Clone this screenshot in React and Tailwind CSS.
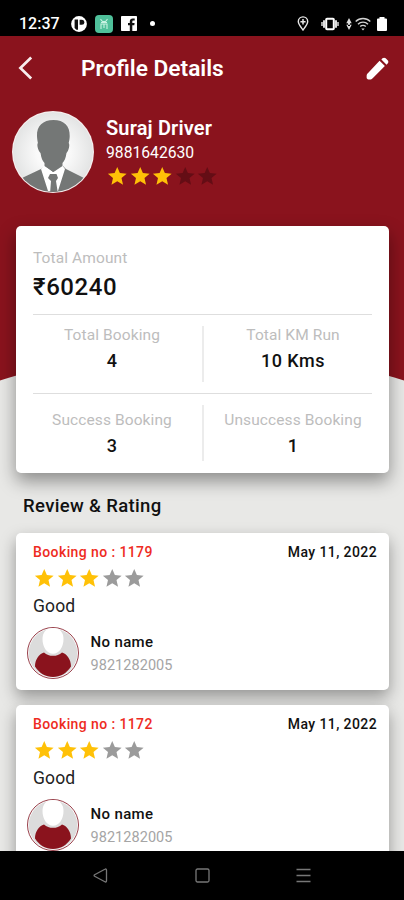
import React from 'react';

const reviews = [
  { id: 1179, date: 'May 11, 2022', rating: 3, comment: 'Good', name: 'No name', phone: '9821282005' },
  { id: 1172, date: 'May 11, 2022', rating: 3, comment: 'Good', name: 'No name', phone: '9821282005' },
];

function StatusBar() {
  return (
    <div className="h-9 shrink-0 bg-black text-white flex items-center pt-[11px] pl-[19px] pr-[17px]">
      <span className="w-[52px] pt-px text-[16px] leading-none font-medium">12:37</span>
      <svg viewBox="0 0 16 16" className="w-4 h-4 mr-2">
        <circle cx="8" cy="8" r="7.9" fill="#fff" />
        <path d="M3.6 3.6H7v10.2H5.4L3.6 12z" fill="#111" />
        <path d="M8.6 3.7h2.2a2.2 2.2 0 0 1 0 5H8.6z" fill="#111" />
      </svg>
      <svg viewBox="0 0 18 18" className="w-[18px] h-[18px] mr-[8px]">
        <rect width="18" height="18" rx="4" fill="#4fc09a" />
        <path d="M5.5 4.2l2 2.3h3l2-2.3M6 14V9h6v5M9 9v4M6 7.5h6" stroke="#c9f2e2" strokeWidth="1.1" fill="none" />
      </svg>
      <svg viewBox="0 0 16 15" className="w-4 h-[15px] mr-[13px]">
        <rect width="16" height="15" rx="0.8" fill="#fff" />
        <path d="M8.8 15V9.3H7V7.1h1.8V5.6c0-2 1.1-3.1 3-3.1h1.9v2.1h-1.3c-.8 0-1.1.4-1.1 1.1v1.4h2.3L13.3 9.3h-2V15z" fill="#111" />
      </svg>
      <span className="w-[5px] h-[5px] rounded-full bg-white"></span>
      <div className="flex items-center ml-auto">
        <svg viewBox="0 0 12 15" className="w-3 h-[15px] mr-[12px]" fill="none" stroke="#e8e8e8">
          <path d="M6 14C3.4 10.700 1.300 8.300 1.300 5.600a4.700 4.700 0 0 1 9.400 0C10.700 8.300 8.600 10.700 6 14z" strokeWidth="1.400" />
          <path d="M6 3v5.400M3.400 5.700h5.200" strokeWidth="1.500" />
        </svg>
        <svg viewBox="0 0 18 14" className="w-[18px] h-[14px] mr-[7px]">
          <rect x="5.200" y="1.800" width="7.600" height="10.400" rx="0.800" fill="none" stroke="#fff" strokeWidth="2" />
          <path d="M3 3.200v7.600M15 3.200v7.600" stroke="#ddd" strokeWidth="2" />
          <path d="M1 5v4M17 5v4" stroke="#ccc" strokeWidth="1.600" />
        </svg>
        <svg viewBox="0 0 6 12" className="w-[6px] h-3 mr-[3px]" fill="#ddd">
          <path d="M3 0l2.700 5.200H.3zM3 12l2.700-5.200H.3zM2 4h2v4H2z" />
        </svg>
        <svg viewBox="0 0 16 14" className="w-4 h-[14px] mr-[6px]" fill="none" stroke="#d2d2d2" strokeWidth="1.400">
          <path d="M.7 4.500a10.300 10.300 0 0 1 14.600 0M3 7.200a7 7 0 0 1 10 0M5.200 9.600a4 4 0 0 1 5.600 0" />
          <path d="M8 13.600l-1.700-2h3.400z" fill="#d2d2d2" stroke="none" />
        </svg>
        <svg viewBox="0 0 10 14" className="w-[10px] h-[14px]">
          <path d="M2.500 0h5v1.400H9a1 1 0 0 1 1 1V13a1 1 0 0 1-1 1H1a1 1 0 0 1-1-1V2.400a1 1 0 0 1 1-1h1.500z" fill="#fff" />
        </svg>
      </div>
    </div>
  );
}

function Stars({ rating, emptyClass }) {
  return (
    <div className="flex">
      {[1, 2, 3, 4, 5].map((n) => (
        <svg
          key={n}
          viewBox="0 0 24 24"
          className={`w-[22.5px] h-[22.5px] ${n <= rating ? 'fill-[#ffc107]' : emptyClass}`}
        >
          <path d="M12 17.27L18.18 21l-1.64-7.03L22 9.24l-7.190-.61L12 2 9.190 8.630 2 9.240l5.460 4.730L5.820 21z" />
        </svg>
      ))}
    </div>
  );
}

function DriverAvatar() {
  return (
    <svg viewBox="0 0 82 82" className="w-[82px] h-[82px] shrink-0">
      <defs>
        <radialGradient id="driverBg">
          <stop offset="0.4" stopColor="#fafafa" />
          <stop offset="1" stopColor="#e3e4e4" />
        </radialGradient>
        <clipPath id="driverClip">
          <circle cx="41" cy="41" r="40" />
        </clipPath>
      </defs>
      <circle cx="41" cy="41" r="41" fill="#f6eeee" />
      <g clipPath="url(#driverClip)">
        <circle cx="41" cy="41" r="40" fill="url(#driverBg)" />
        <path d="M32 55l-3 3-19 9-8 16h78l-8-16-18-9-3-3z" fill="#747776" />
        <path d="M32 54L29 58l7 22h10l7-22-3-4-9 7z" fill="#fff" />
        <path d="M38 63h6.500l1.500 4-2 3 2 13H38l1-13-3-3z" fill="#747776" />
        <path
          d="M41.500 9C31 9 24.500 15 25 25c.1 3 .6 5 .9 7-1.400 1.500.2 8 2.600 10 .8 5 2 8 4 10v3l9 6 9-6v-3c2-2 3.200-5 4-10 2.300-2 3.600-8.500 2.200-10 .4-2 1-4 1-7C58 15 52 9 41.500 9z"
          fill="#747776"
        />
      </g>
    </svg>
  );
}

function UserAvatar() {
  return (
    <svg viewBox="0 0 52 52" className="w-[52px] h-[52px] shrink-0">
      <circle cx="26" cy="26" r="25.500" fill="#fff" stroke="#8c2a35" strokeWidth="0.900" />
      <circle cx="26" cy="26" r="24.300" fill="#dcdcdc" />
      <path d="M17 25.500c-5 1.500-9 7-9 14C12.500 46.500 19 50 26 50s13.500-3.500 18-10.500c0-7-4-12.500-9-14-2.500 2.500-5.500 3.300-9 3.300s-6.500-.8-9-3.300z" fill="#8a131d" />
      <path d="M26 .9c-7 0-10.500 4.600-10.500 11.100 0 8 4.500 14.800 10.500 14.800S36.500 20 36.500 12C36.500 5.500 33 .9 26 .9z" fill="#fff" />
    </svg>
  );
}

function Stat({ label, value }) {
  return (
    <div className="w-[158px] flex flex-col items-center">
      <span className="text-[15.5px] leading-[20px] tracking-[0.1px] text-[#bdbdbd] whitespace-nowrap">{label}</span>
      <span className="mt-1.5 text-[18px] leading-[20px] font-medium tracking-[0.5px] text-[#111]">{value}</span>
    </div>
  );
}

function StatDivider() {
  return <div className="w-0.5 h-14 bg-[#ececec]"></div>;
}

function ReviewCard({ review }) {
  return (
    <div className="h-[157px] shrink-0 bg-white rounded-[5px] shadow-[0_7px_16px_rgba(0,0,0,0.36)] pt-[10px] pl-[17px] pr-3">
      <div className="flex justify-between text-[14px] leading-[18px] font-medium tracking-[0.4px]">
        <span className="text-[#ee2b22]">Booking no : {review.id}</span>
        <span className="text-[#111]">{review.date}</span>
      </div>
      <div className="mt-[6px]">
        <Stars rating={review.rating} emptyClass="fill-[#9b9b9b]" />
      </div>
      <p className="mt-[6.5px] text-[17.5px] leading-[20px] tracking-[0.15px] text-[#222]">{review.comment}</p>
      <div className="mt-[11px] -ml-1.5 flex items-center gap-[11.5px]">
        <UserAvatar />
        <div className="flex flex-col">
          <span className="text-[15px] leading-[20px] font-medium tracking-[0.35px] text-[#111]">{review.name}</span>
          <span className="mt-[3px] pt-px -mb-px text-[14.5px] leading-[20px] tracking-[0.05px] text-[#a5a5a5]">{review.phone}</span>
        </div>
      </div>
    </div>
  );
}

function NavBar() {
  return (
    <div className="h-[49px] shrink-0 bg-black flex items-center pl-[93px] pr-[93px] justify-between">
      <svg viewBox="0 0 15 15" className="w-[15px] h-[15px]" fill="none" stroke="#777" strokeWidth="1.300" strokeLinejoin="round">
        <path d="M13.500 2.200v10.600c0 1-.8 1.500-1.600 1L1.600 8.200c-.7-.4-.7-1 0-1.400l10.300-5.600c.8-.5 1.600 0 1.600 1z" />
      </svg>
      <svg viewBox="0 0 15 15" className="w-[15px] h-[15px]" fill="none" stroke="#777" strokeWidth="1.300">
        <rect x="1" y="1" width="13" height="13" rx="1.500" />
      </svg>
      <svg viewBox="0 0 15 15" className="w-[15px] h-[15px]" stroke="#777" strokeWidth="1.500">
        <path d="M.5 1.500h14M.5 7.500h14M.5 13.500h14" />
      </svg>
    </div>
  );
}

export default function App() {
  return (
    <div className="w-[404px] h-[900px] flex flex-col overflow-hidden font-['Roboto',sans-serif]">
      <StatusBar />

      <main className="relative flex-1 min-h-0 overflow-hidden bg-[#e8e8e6]">
        {/* Red backdrop, cut at the bottom by a wide arc */}
        <div className="absolute inset-x-0 top-0 h-[360px] bg-[#8a131d] overflow-hidden">
          <div className="absolute top-[318px] -left-[70px] w-[544px] h-[160px] rounded-[50%] bg-[#e8e8e6]"></div>
        </div>

        <div className="relative flex flex-col">
          <header className="h-16 flex items-center pl-[18px] pr-[12px] text-white">
            <svg viewBox="0 0 15 24" className="w-[15px] h-6" fill="none" stroke="#f8eeee" strokeWidth="2.700">
              <path d="M13.200 1.500L2.400 12l10.800 10.500" />
            </svg>
            <h1 className="ml-[48px] pt-px text-[22.7px] leading-[28px] font-semibold">Profile Details</h1>
            <svg viewBox="0 0 24 24" className="ml-auto w-[29px] h-[29px]" fill="#fff">
              <path d="M13.700 5.500l4.400 4.400L8 20c-.7.700-1.300 1-2.200 1H4.500C3.600 21 3 20.400 3 19.500v-1.300c0-.9.300-1.500 1-2.200zM15.200 4.500l.9-.9c.8-.8 1.900-.8 2.700 0l1.600 1.600c.8.8.8 1.900 0 2.700l-.9.9z" />
            </svg>
          </header>

          <section className="mt-[11px] pl-3 flex gap-3 text-white">
            <DriverAvatar />
            <div className="flex flex-col pt-[5px]">
              <span className="text-[20px] leading-[24px] font-semibold tracking-[0.15px]">Suraj Driver</span>
              <span className="mt-[3px] text-[15.7px] leading-[20px]">9881642630</span>
              <div className="mt-[2px]">
                <Stars rating={3} emptyClass="fill-[#640d15]" />
              </div>
            </div>
          </section>

          <section className="mt-[33px] ml-4 mr-[15px] h-[247px] bg-white rounded-[5px] shadow-[0_8px_18px_rgba(0,0,0,0.4)] pl-[17px] pr-[17px]">
            <div className="pt-[22px] h-[88px] flex flex-col">
              <span className="text-[15.5px] leading-[20px] tracking-[0.1px] text-[#bdbdbd]">Total Amount</span>
              <span className="mt-[5px] text-[24px] leading-[28px] font-medium tracking-[0.6px] text-[#111]">₹60240</span>
            </div>
            <div className="border-t border-[#dedede] h-[79px] pt-[10px] flex justify-between">
              <Stat label="Total Booking" value="4" />
              <div className="pt-px">
                <StatDivider />
              </div>
              <Stat label="Total KM Run" value="10 Kms" />
            </div>
            <div className="border-t border-[#dedede] h-[80px] pt-[11px] flex justify-between">
              <div className="pt-[5px]">
                <Stat label="Success Booking" value="3" />
              </div>
              <StatDivider />
              <div className="pt-[5px]">
                <Stat label="Unsuccess Booking" value="1" />
              </div>
            </div>
          </section>

          <h2 className="mt-[21px] ml-[23px] text-[18.5px] leading-[24px] font-medium tracking-[0.35px] text-[#111]">Review &amp; Rating</h2>

          <div className="mt-[15px] ml-4 mr-[15px] flex flex-col gap-[15px]">
            {reviews.map((review) => (
              <ReviewCard key={review.id} review={review} />
            ))}
          </div>
        </div>
      </main>

      <NavBar />
    </div>
  );
}
